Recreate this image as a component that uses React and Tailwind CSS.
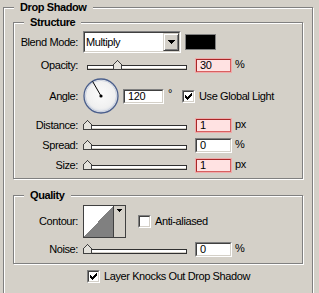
import React from "react";

const SUNK_OUT = "border border-t-[#808080] border-l-[#808080] border-b-white border-r-white";
const SUNK_IN = "border border-t-[#404040] border-l-[#404040] border-b-[#d4d0c8] border-r-[#d4d0c8]";

function Group({ title, className = "", children }) {
  return (
    <div className={"flex flex-col border border-[#808080] shadow-[inset_1px_1px_0_#fff,1px_1px_0_#fff] " + className}>
      <div className="-mt-[7px] ml-[10px] self-start bg-[#d4d0c8] px-[6px] text-[11px] font-bold leading-[13px]">
        {title}
      </div>
      {children}
    </div>
  );
}

function Label({ children, className = "" }) {
  return <div className={"w-[64px] shrink-0 text-right leading-[13px] " + className}>{children}</div>;
}

function Check({ checked }) {
  return (
    <div className={"h-[13px] w-[13px] shrink-0 " + SUNK_OUT}>
      <div className={"h-full w-full bg-white " + SUNK_IN}>
        {checked && (
          <svg width="9" height="9" viewBox="0 0 9 9" shapeRendering="crispEdges" className="block">
            <path d="M1 3h1v3H1zM2 4h1v3H2zM3 5h1v3H3zM4 4h1v3H4zM5 3h1v3H5zM6 2h1v3H6zM7 1h1v3H7z" fill="#000" />
          </svg>
        )}
      </div>
    </div>
  );
}

function Field({ value, warn, className = "" }) {
  if (warn) {
    return (
      <div className={"h-[15px] w-[37px] shrink-0 border border-[#eeaaaa] " + className}>
        <div className="h-full w-full border border-t-[#a82828] border-l-[#a82828] border-b-[#d86060] border-r-[#d86060] bg-[#ffe2e2] pl-[3px] leading-[11px]">
          {value}
        </div>
      </div>
    );
  }
  return (
    <div className={"h-[15px] w-[37px] shrink-0 " + SUNK_OUT + " " + className}>
      <div className={"h-full w-full bg-white pl-[3px] leading-[11px] " + SUNK_IN}>{value}</div>
    </div>
  );
}

function Slider({ pct, className = "" }) {
  return (
    <div className={"relative h-[10px] w-[100px] shrink-0 " + className}>
      <div className="mt-[5px] h-[5px] border border-[#303030] bg-white shadow-[inset_0_-1px_0_#d4d0c8]" />
      <svg
        className="absolute top-0"
        style={{ left: Math.round(pct * 99) - 4 }}
        width="9"
        height="10"
        viewBox="0 0 9 10"
        shapeRendering="crispEdges"
      >
        <polygon points="4.5,0.5 8.5,4.5 8.5,9.5 0.5,9.5 0.5,4.5" fill="#e4e2dc" stroke="#404040" strokeWidth="1" />
      </svg>
    </div>
  );
}

function SliderRow({ label, pct, value, warn, unit }) {
  return (
    <div className="mt-[5px] flex h-[15px] items-start">
      <Label className="mt-[1px]">{label}</Label>
      <Slider pct={pct} className="ml-[9px] mt-[2px]" />
      <Field value={value} warn={warn} className="ml-[8px]" />
      <div className="ml-[3px] leading-[13px]">{unit}</div>
    </div>
  );
}

function Dial() {
  return (
    <svg width="36" height="36" viewBox="0 0 36 36" className="ml-[5px] shrink-0">
      <defs>
        <radialGradient id="dialg" cx="50%" cy="45%" r="55%">
          <stop offset="0" stopColor="#fbfbfb" />
          <stop offset="0.75" stopColor="#f0f0f0" />
          <stop offset="1" stopColor="#d2d8e4" />
        </radialGradient>
      </defs>
      <circle cx="18" cy="18" r="17" fill="url(#dialg)" stroke="#4b5f8c" strokeWidth="1.3" />
      <circle cx="18" cy="18" r="15.6" fill="none" stroke="#c4cbdb" strokeWidth="0.8" />
      <line x1="18" y1="18" x2="9.6" y2="3.4" stroke="#000" strokeWidth="1" />
      <circle cx="18" cy="18" r="1.6" fill="#000" />
    </svg>
  );
}

export default function App() {
  return (
    <div className="h-[293px] w-[319px] overflow-hidden bg-[#d4d0c8] pt-[7px] pl-[3px] font-['Liberation_Sans',Arial,sans-serif] text-[11px] tracking-[-0.4px] text-black">
      <Group title="Drop Shadow" className="w-[310px] pb-[40px]">
        <Group title="Structure" className="mx-[9px] mt-[8px] pb-[5px]">
          {/* Blend mode */}
          <div className="mt-[2px] flex h-[22px] items-center">
            <Label>Blend Mode:</Label>
            <div className={"ml-[5px] flex h-[22px] w-[98px] shrink-0 " + SUNK_OUT}>
              <div className={"flex flex-1 bg-white " + SUNK_IN}>
                <div className="flex-1 pl-[1px] leading-[18px]">Multiply</div>
                <div className="flex h-full w-[16px] items-center justify-center border border-t-[#d4d0c8] border-l-[#d4d0c8] border-b-[#404040] border-r-[#404040] bg-[#d4d0c8] shadow-[inset_1px_1px_0_#fff,inset_-1px_-1px_0_#808080]">
                  <svg width="7" height="4" viewBox="0 0 7 4" shapeRendering="crispEdges">
                    <path d="M0 0h7L3.5 4z" fill="#000" />
                  </svg>
                </div>
              </div>
            </div>
            <div className="ml-[4px] h-[16px] w-[31px] shrink-0 border border-[#808080] bg-black" />
          </div>

          <SliderRow label="Opacity:" pct={0.3} value="30" warn unit="%" />

          {/* Angle */}
          <div className="mt-[5px] flex h-[36px] items-center">
            <Label>Angle:</Label>
            <Dial />
            <div className={"ml-[4px] h-[15px] w-[41px] shrink-0 " + SUNK_OUT}>
              <div className={"h-full w-full bg-white pl-[3px] leading-[11px] " + SUNK_IN}>120</div>
            </div>
            <div className="ml-[4px] self-start mt-[9px] leading-[13px]">°</div>
            <div className="ml-[10px]">
              <Check checked />
            </div>
            <div className="ml-[4px] leading-[13px]">Use Global Light</div>
          </div>

          <div className="-mt-[1px]" />
          <SliderRow label="Distance:" pct={0} value="1" warn unit="px" />
          <SliderRow label="Spread:" pct={0} value="0" unit="%" />
          <SliderRow label="Size:" pct={0} value="1" warn unit="px" />
        </Group>

        <Group title="Quality" className="mx-[9px] mt-[16px] pb-[6px]">
          <div className="mt-[3px] flex h-[33px] items-center">
            <Label>Contour:</Label>
            <div className="ml-[5px] flex h-[33px] w-[43px] shrink-0 border border-[#404040] bg-[#d4d0c8]">
              <svg width="29" height="31" viewBox="0 0 29 31" shapeRendering="crispEdges" className="block shrink-0">
                <rect x="0" y="0" width="29" height="31" fill="#fff" />
                <polygon points="0,31 29,0 29,31" fill="#808080" />
              </svg>
              <div className="h-full w-[1px] bg-[#404040]" />
              <div className="flex flex-1 justify-center pt-[3px]">
                <svg width="5" height="3" viewBox="0 0 5 3" shapeRendering="crispEdges" className="block">
                  <path d="M0 0h5v1H0zM1 1h3v1H1zM2 2h1v1H2z" fill="#000" />
                </svg>
              </div>
            </div>
            <div className="ml-[12px]">
              <Check />
            </div>
            <div className="ml-[4px] leading-[13px]">Anti-aliased</div>
          </div>
          <div className="-mt-[1px]" />
          <SliderRow label="Noise:" pct={0} value="0" unit="%" />
        </Group>

        <div className="ml-[83px] mt-[6px] flex items-center">
          <Check checked />
          <div className="ml-[4px] leading-[13px]">Layer Knocks Out Drop Shadow</div>
        </div>
      </Group>
    </div>
  );
}
